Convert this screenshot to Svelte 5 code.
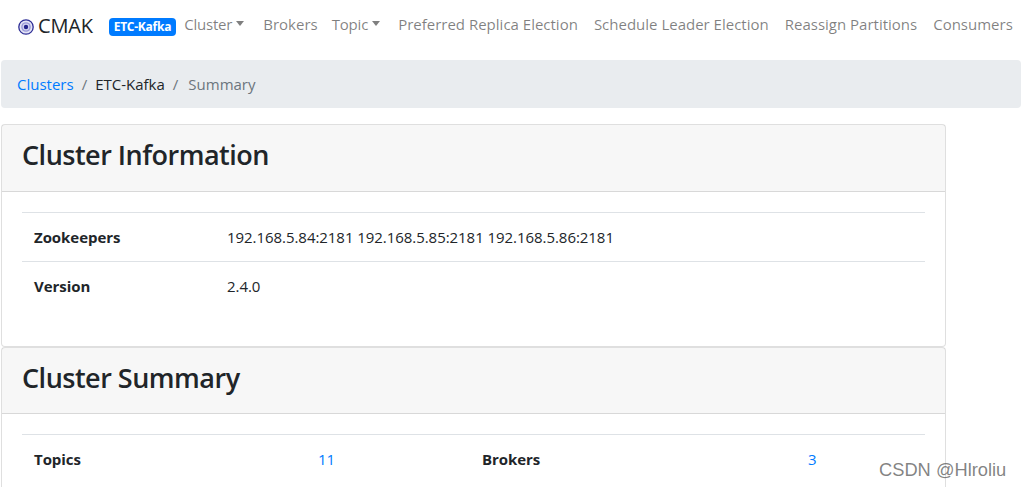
<script lang="ts">
	const navItems = [
		{ label: 'Cluster', caret: true },
		{ label: 'Brokers' },
		{ label: 'Topic', caret: true },
		{ label: 'Preferred Replica Election' },
		{ label: 'Schedule Leader Election' },
		{ label: 'Reassign Partitions' },
		{ label: 'Consumers' }
	];
</script>

<div class="page">
	<nav class="navbar">
		<a class="brand" href="#top">
			<svg class="logo" viewBox="0 0 16 16" width="16" height="16">
				<circle cx="8" cy="8" r="7.2" fill="#e3e3f5" stroke="#2e2e96" stroke-width="1.3" />
				<circle cx="8" cy="8" r="4.8" fill="#9a9ad8" />
				<circle cx="8" cy="8" r="3.4" fill="#d5d5f0" />
				<circle cx="8" cy="8" r="2.2" fill="#24248c" />
			</svg>
			<span>CMAK</span>
		</a>
		<span class="badge">ETC-Kafka</span>
		<ul class="nav">
			{#each navItems as item}
				<li>
					<a href="#top">{item.label}</a>
					{#if item.caret}<i class="caret"></i>{/if}
				</li>
			{/each}
		</ul>
	</nav>

	<ol class="breadcrumb">
		<li><a href="#top">Clusters</a></li>
		<li class="sep">/</li>
		<li>ETC-Kafka</li>
		<li class="sep">/</li>
		<li class="active">Summary</li>
	</ol>

	<div class="cards">
		<section class="card">
			<header class="first"><h3>Cluster Information</h3></header>
			<div class="body info">
				<table>
					<tbody>
						<tr>
							<th>Zookeepers</th>
							<td>192.168.5.84:2181 192.168.5.85:2181 192.168.5.86:2181</td>
						</tr>
						<tr>
							<th>Version</th>
							<td>2.4.0</td>
						</tr>
					</tbody>
				</table>
			</div>
		</section>

		<section class="card">
			<header><h3>Cluster Summary</h3></header>
			<div class="body">
				<table class="summary">
					<colgroup>
						<col class="c1" />
						<col class="c2" />
						<col class="c3" />
						<col class="c4" />
					</colgroup>
					<tbody>
						<tr>
							<th>Topics</th>
							<td><a href="#top">11</a></td>
							<th>Brokers</th>
							<td><a href="#top">3</a></td>
						</tr>
					</tbody>
				</table>
			</div>
		</section>
	</div>

	<div class="watermark">CSDN @Hlroliu</div>
</div>

<style>
	:global(body) {
		margin: 0;
		background: #fff;
		overflow: hidden;
	}

	.page {
		position: relative;
		width: 1021px;
		height: 487px;
		overflow: hidden;
		font-family: 'Open Sans', 'Noto Sans', sans-serif;
		font-size: 15px;
		color: #212529;
	}

	a {
		color: #007bff;
		text-decoration: none;
	}

	.navbar {
		display: flex;
		align-items: center;
		height: 60px;
		padding: 0 0 10px 18px;
		box-sizing: border-box;
		white-space: nowrap;
	}

	.brand {
		display: flex;
		align-items: center;
		gap: 4px;
		color: #212529;
		font-size: 20px;
		letter-spacing: -0.2px;
	}

	.logo {
		margin-top: 3px;
	}

	.badge {
		margin-left: 16px;
		margin-top: 3px;
		padding: 2px 5px;
		border-radius: 4px;
		background: #007bff;
		color: #fff;
		font-size: 12px;
		font-weight: 700;
		line-height: 14px;
		letter-spacing: -0.25px;
	}

	.nav {
		display: flex;
		gap: 16px;
		margin: 0 0 0 8px;
		padding: 0;
		list-style: none;
	}

	.nav li {
		display: flex;
		align-items: center;
		margin-top: -2px;
	}

	.nav li:nth-child(1),
	.nav li:nth-child(3) {
		letter-spacing: -0.2px;
	}

	.nav li:nth-child(1) {
		padding-right: 3px;
	}

	.nav li:nth-child(2) {
		margin-right: -2px;
	}

	.nav li:nth-child(4) {
		margin-left: 2px;
	}

	.nav a {
		color: rgba(0, 0, 0, 0.5);
	}

	.caret {
		margin-left: 4px;
		margin-top: -2px;
		border-top: 5px solid rgba(0, 0, 0, 0.5);
		border-left: 4.5px solid transparent;
		border-right: 4.5px solid transparent;
	}

	.breadcrumb {
		display: flex;
		align-items: center;
		gap: 8px;
		height: 48px;
		box-sizing: border-box;
		margin: 0 0 16px 1px;
		padding: 0 16px;
		border-radius: 4px;
		background: #e9ecef;
		list-style: none;
	}

	.sep,
	.active {
		color: #6c757d;
	}

	.active {
		margin-left: 2px;
	}

	.cards {
		width: 945px;
		margin-left: 1px;
	}

	.card {
		border: 1px solid rgba(0, 0, 0, 0.125);
		border-radius: 4px;
		background: #fff;
	}

	.card header {
		height: 66px;
		box-sizing: border-box;
		display: flex;
		align-items: center;
		padding: 0 20px 6px;
		background: rgba(0, 0, 0, 0.03);
		border-bottom: 1px solid rgba(0, 0, 0, 0.125);
	}

	.card header.first {
		height: 67px;
		padding-bottom: 8px;
	}

	h3 {
		margin: 0;
		font-size: 27px;
		font-weight: 600;
		letter-spacing: -0.5px;
	}

	.body {
		padding: 20px;
	}

	.info {
		padding-bottom: 36px;
	}

	table {
		width: 100%;
		border-collapse: collapse;
		table-layout: fixed;
	}

	th,
	td {
		height: 48px;
		padding: 0 12px;
		border-top: 1px solid #dee2e6;
		text-align: left;
		vertical-align: middle;
		letter-spacing: -0.05px;
	}

	th {
		width: 169px;
		font-weight: 700;
	}

	.summary th,
	.summary td {
		width: auto;
	}

	.c1 {
		width: 284px;
	}

	.c2 {
		width: 164px;
	}

	.c3 {
		width: 326px;
	}

	.watermark {
		position: absolute;
		left: 879px;
		top: 460px;
		font-family: 'Liberation Sans', Arial, sans-serif;
		font-size: 18.3px;
		line-height: 20px;
		color: rgba(90, 90, 90, 0.75);
	}
</style>
